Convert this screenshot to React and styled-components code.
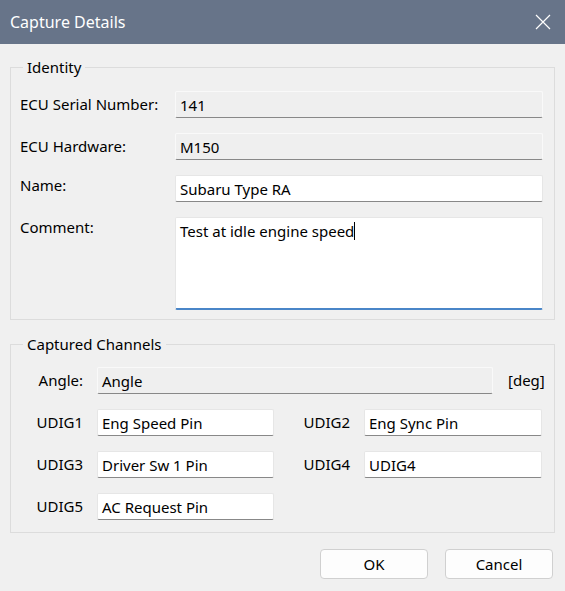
import { Fragment } from 'react'
import styled, { createGlobalStyle } from 'styled-components'

const GlobalStyle = createGlobalStyle`
  html, body {
    margin: 0;
    padding: 0;
    background: #f0f0f0;
  }
  body {
    font-family: "Noto Sans", "Open Sans", sans-serif;
    font-size: 15px;
    color: #000;
  }
`

const Window = styled.div`
  width: 565px;
  height: 591px;
  display: flex;
  flex-direction: column;
  background: #f0f0f0;
`

const TitleBar = styled.div`
  height: 44px;
  flex: none;
  display: flex;
  align-items: center;
  justify-content: space-between;
  padding: 0 14px 0 10px;
  background: #677489;
  color: #fff;
  font-size: 16px;
`

const CloseButton = styled.button`
  border: 0;
  padding: 0;
  background: none;
  color: #fff;
  display: flex;
  width: 16px;
  height: 16px;
`

const Body = styled.div`
  padding: 13px 10px 0 10px;
  display: flex;
  flex-direction: column;
  gap: 14px;
`

const Group = styled.fieldset`
  margin: 0;
  border: 1px solid #dcdcdc;
  padding: ${({ $pad }) => $pad};
  min-width: 0;
`

const Legend = styled.legend`
  margin-left: ${({ $shift }) => $shift};
  padding: 0 4px;
  line-height: 20px;
`

const IdentityGrid = styled.div`
  display: grid;
  grid-template-columns: 155px 1fr;
  row-gap: 15px;
`

const Label = styled.div`
  line-height: 20px;
  padding-top: ${({ $top }) => $top || '3px'};
  text-align: ${({ $align }) => $align || 'left'};
  white-space: nowrap;
`

const Field = styled.div`
  box-sizing: border-box;
  height: ${({ $h }) => $h || '27px'};
  padding: 2px 4px 0 4px;
  line-height: 22px;
  background: ${({ $readOnly }) => ($readOnly ? '#efefef' : '#fff')};
  border: 1px solid ${({ $readOnly }) => ($readOnly ? '#f9f9f9' : '#e6e6e6')};
  border-bottom: ${({ $focused }) => ($focused ? '2px solid #4a86c8' : '1px solid #888')};
  border-radius: 2px;
  white-space: nowrap;
  overflow: hidden;
`

const Caret = styled.span`
  display: inline-block;
  width: 1px;
  height: 18px;
  background: #000;
  vertical-align: -3px;
`

const AngleRow = styled.div`
  display: flex;
  align-items: flex-start;
  margin-bottom: 15px;
`

const AngleLabel = styled(Label)`
  width: 54px;
  margin-right: 14px;
`

const AngleField = styled(Field)`
  flex: 1;
`

const Unit = styled(Label)`
  width: 35px;
  margin-left: 15px;
`

const ChannelGrid = styled.div`
  display: grid;
  grid-template-columns: 54px 177px 62px 178px;
  column-gap: 14px;
  row-gap: 15px;
`

const ButtonRow = styled.div`
  display: flex;
  justify-content: flex-end;
  gap: 17px;
  padding: 16px 12px 0 0;
`

const Button = styled.button`
  width: 108px;
  height: 30px;
  border: 1px solid #d0d0d0;
  border-radius: 4px;
  background: #fdfdfd;
  font-family: inherit;
  font-size: 15px;
  color: #000;
  padding: 0;
`

const channels = [
  ['UDIG1', 'Eng Speed Pin'],
  ['UDIG2', 'Eng Sync Pin'],
  ['UDIG3', 'Driver Sw 1 Pin'],
  ['UDIG4', 'UDIG4'],
  ['UDIG5', 'AC Request Pin'],
]

export default function App() {
  return (
    <Window>
      <GlobalStyle />
      <TitleBar>
        <span>Capture Details</span>
        <CloseButton aria-label="Close">
          <svg width="16" height="16" viewBox="0 0 16 16">
            <path d="M1 1L15 15M15 1L1 15" stroke="#fff" strokeWidth="1.2" />
          </svg>
        </CloseButton>
      </TitleBar>
      <Body>
        <Group $pad="14px 11px 9px 9px">
          <Legend $shift="3px">Identity</Legend>
          <IdentityGrid>
            <Label>ECU Serial Number:</Label>
            <Field $readOnly>141</Field>
            <Label>ECU Hardware:</Label>
            <Field $readOnly>M150</Field>
            <Label $top="0">Name:</Label>
            <Field>Subaru Type RA</Field>
            <Label $top="0">Comment:</Label>
            <Field $h="93px" $focused>
              Test at idle engine speed<Caret />
            </Field>
          </IdentityGrid>
        </Group>
        <Group $pad="13px 11px 12px 18px">
          <Legend $shift="-6px">Captured Channels</Legend>
          <AngleRow>
            <AngleLabel $align="right">Angle:</AngleLabel>
            <AngleField $readOnly>Angle</AngleField>
            <Unit>[deg]</Unit>
          </AngleRow>
          <ChannelGrid>
            {channels.map(([name, value]) => (
              <Fragment key={name}>
                <Label $align="right">{name}</Label>
                <Field>{value}</Field>
              </Fragment>
            ))}
          </ChannelGrid>
        </Group>
      </Body>
      <ButtonRow>
        <Button>OK</Button>
        <Button>Cancel</Button>
      </ButtonRow>
    </Window>
  )
}
